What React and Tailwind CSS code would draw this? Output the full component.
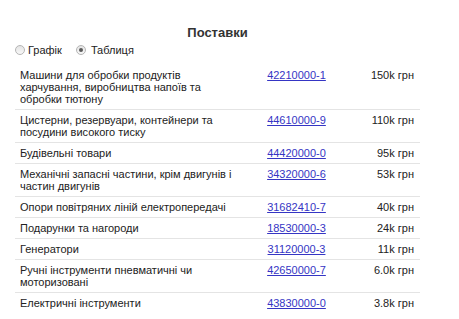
import React, { useState } from "react";

const rows = [
  { name: "Машини для обробки продуктів харчування, виробництва напоїв та обробки тютюну", code: "42210000-1", amount: "150k грн" },
  { name: "Цистерни, резервуари, контейнери та посудини високого тиску", code: "44610000-9", amount: "110k грн" },
  { name: "Будівельні товари", code: "44420000-0", amount: "95k грн" },
  { name: "Механічні запасні частини, крім двигунів і частин двигунів", code: "34320000-6", amount: "53k грн" },
  { name: "Опори повітряних ліній електропередачі", code: "31682410-7", amount: "40k грн" },
  { name: "Подарунки та нагороди", code: "18530000-3", amount: "24k грн" },
  { name: "Генератори", code: "31120000-3", amount: "11k грн" },
  { name: "Ручні інструменти пневматичні чи моторизовані", code: "42650000-7", amount: "6.0k грн" },
  { name: "Електричні інструменти", code: "43830000-0", amount: "3.8k грн" },
];

const Radio = ({ checked, onClick, className }) => (
  <span
    onClick={onClick}
    className={`inline-flex items-center justify-center w-[10px] h-[10px] rounded-full border border-[#b5b5b5] bg-gradient-to-b from-[#e4e4e4] to-[#f8f8f8] cursor-pointer ${className}`}
  >
    {checked && <span className="w-[4px] h-[4px] rounded-full bg-[#5a5a5a]" />}
  </span>
);

const App = () => {
  const [view, setView] = useState("table");

  return (
    <div className="w-[459px] h-[319px] bg-white overflow-hidden font-['Liberation_Sans',Arial,sans-serif] text-[11px] text-[#222]">
      <div className="ml-[15px] w-[405px] pt-[25px]">
        <h2 className="text-center text-[13px] leading-[15px] font-bold text-[#333]">Поставки</h2>

        {/* view switch */}
        <div className="flex items-center mt-[3px] h-[14px] text-[11px] leading-[14px]">
          <Radio checked={view === "chart"} onClick={() => setView("chart")} className="mr-[3px]" />
          <span>Графік</span>
          <Radio checked={view === "table"} onClick={() => setView("table")} className="ml-[14px] mr-[5px]" />
          <span>Таблиця</span>
        </div>

        <table className="mt-[8px] w-[405px] table-fixed border-collapse">
          <colgroup>
            <col className="w-[223px]" />
            <col className="w-[117px]" />
            <col className="w-[65px]" />
          </colgroup>
          <tbody>
            {rows.map((row, i) => (
              <tr key={row.code} className={i < rows.length - 1 ? "border-b border-[#e4e4e4]" : ""}>
                <td className="align-top px-[5px] py-[4px] leading-[12px]">{row.name}</td>
                <td className="align-top text-center py-[4px] leading-[12px]">
                  <a href="#" className="text-[#3535c4] underline">{row.code}</a>
                </td>
                <td className="align-top text-right pr-[6px] py-[4px] leading-[12px] whitespace-nowrap">{row.amount}</td>
              </tr>
            ))}
          </tbody>
        </table>
      </div>
    </div>
  );
};

export default App;
